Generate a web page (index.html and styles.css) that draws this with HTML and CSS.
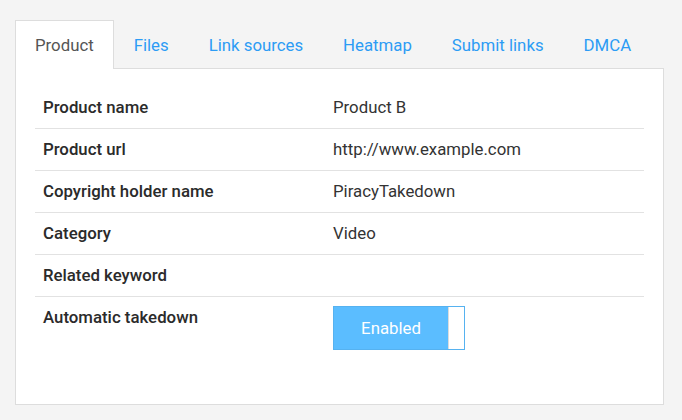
FILE: index.html
```html
<!DOCTYPE html>
<html>
<head>
<meta charset="utf-8">
<link rel="stylesheet" href="styles.css">
</head>
<body>
<div class="page">
  <ul class="tabs">
    <li class="tab active"><a>Product</a></li>
    <li class="tab"><a>Files</a></li>
    <li class="tab"><a>Link sources</a></li>
    <li class="tab"><a>Heatmap</a></li>
    <li class="tab"><a>Submit links</a></li>
    <li class="tab"><a>DMCA</a></li>
  </ul>
  <div class="panel">
    <table class="info">
      <tr><th>Product name</th><td>Product B</td></tr>
      <tr><th>Product url</th><td>http://www.example.com</td></tr>
      <tr><th>Copyright holder name</th><td>PiracyTakedown</td></tr>
      <tr><th>Category</th><td>Video</td></tr>
      <tr><th>Related keyword</th><td></td></tr>
      <tr class="last"><th>Automatic takedown</th><td>
        <div class="toggle"><span class="toggle-on">Enabled</span><span class="toggle-knob"></span></div>
      </td></tr>
    </table>
  </div>
</div>
</body>
</html>
```
FILE: styles.css
```css
html, body {
  margin: 0;
  padding: 0;
  background: #f4f4f4;
  font-family: Roboto, "Liberation Sans", sans-serif;
  font-size: 16.8px;
  color: #333;
}
.page {
  padding: 20px 18px 0 15px;
}
.tabs {
  list-style: none;
  margin: 0 0 -1px 0;
  padding: 0;
  display: flex;
  position: relative;
  z-index: 1;
}
.tab {
  height: 48px;
  padding: 0 19px 0 19px;
  border: 1px solid transparent;
  border-bottom: none;
  display: flex;
  align-items: center;
}
.tab a {
  color: #2c9cf5;
  line-height: 22px;
}
.tab.active {
  background: #fff;
  border-color: #ddd;
}
.tab.active a {
  color: #555;
}
.panel {
  background: #fff;
  border: 1px solid #ddd;
  padding: 18px 19px 44px 19px;
  height: 273px;
}
.info {
  width: 100%;
  border-collapse: collapse;
}
.info th, .info td {
  text-align: left;
  padding: 10px 8px;
  line-height: 21px;
  vertical-align: top;
  border-bottom: 1px solid #e2e2e2;
  color: #333;
}
.info th {
  font-family: "Roboto Medium", Roboto, "Liberation Sans", sans-serif;
  font-weight: 500;
  color: #2b2b2b;
  width: 274px;
}
.info td {
  font-weight: 400;
}
.info tr.last th, .info tr.last td {
  border-bottom: none;
}
.info tr.last td {
  padding-top: 9px;
}
.toggle {
  display: flex;
  width: 130px;
  height: 42px;
  border: 1px solid #56b2f0;
}
.toggle-on {
  flex: 1;
  background: #5bbdff;
  color: #fff;
  display: flex;
  align-items: center;
  justify-content: center;
  border-right: 1px solid #dcdcdc;
}
.toggle-knob {
  width: 15px;
  background: #fff;
}
```
